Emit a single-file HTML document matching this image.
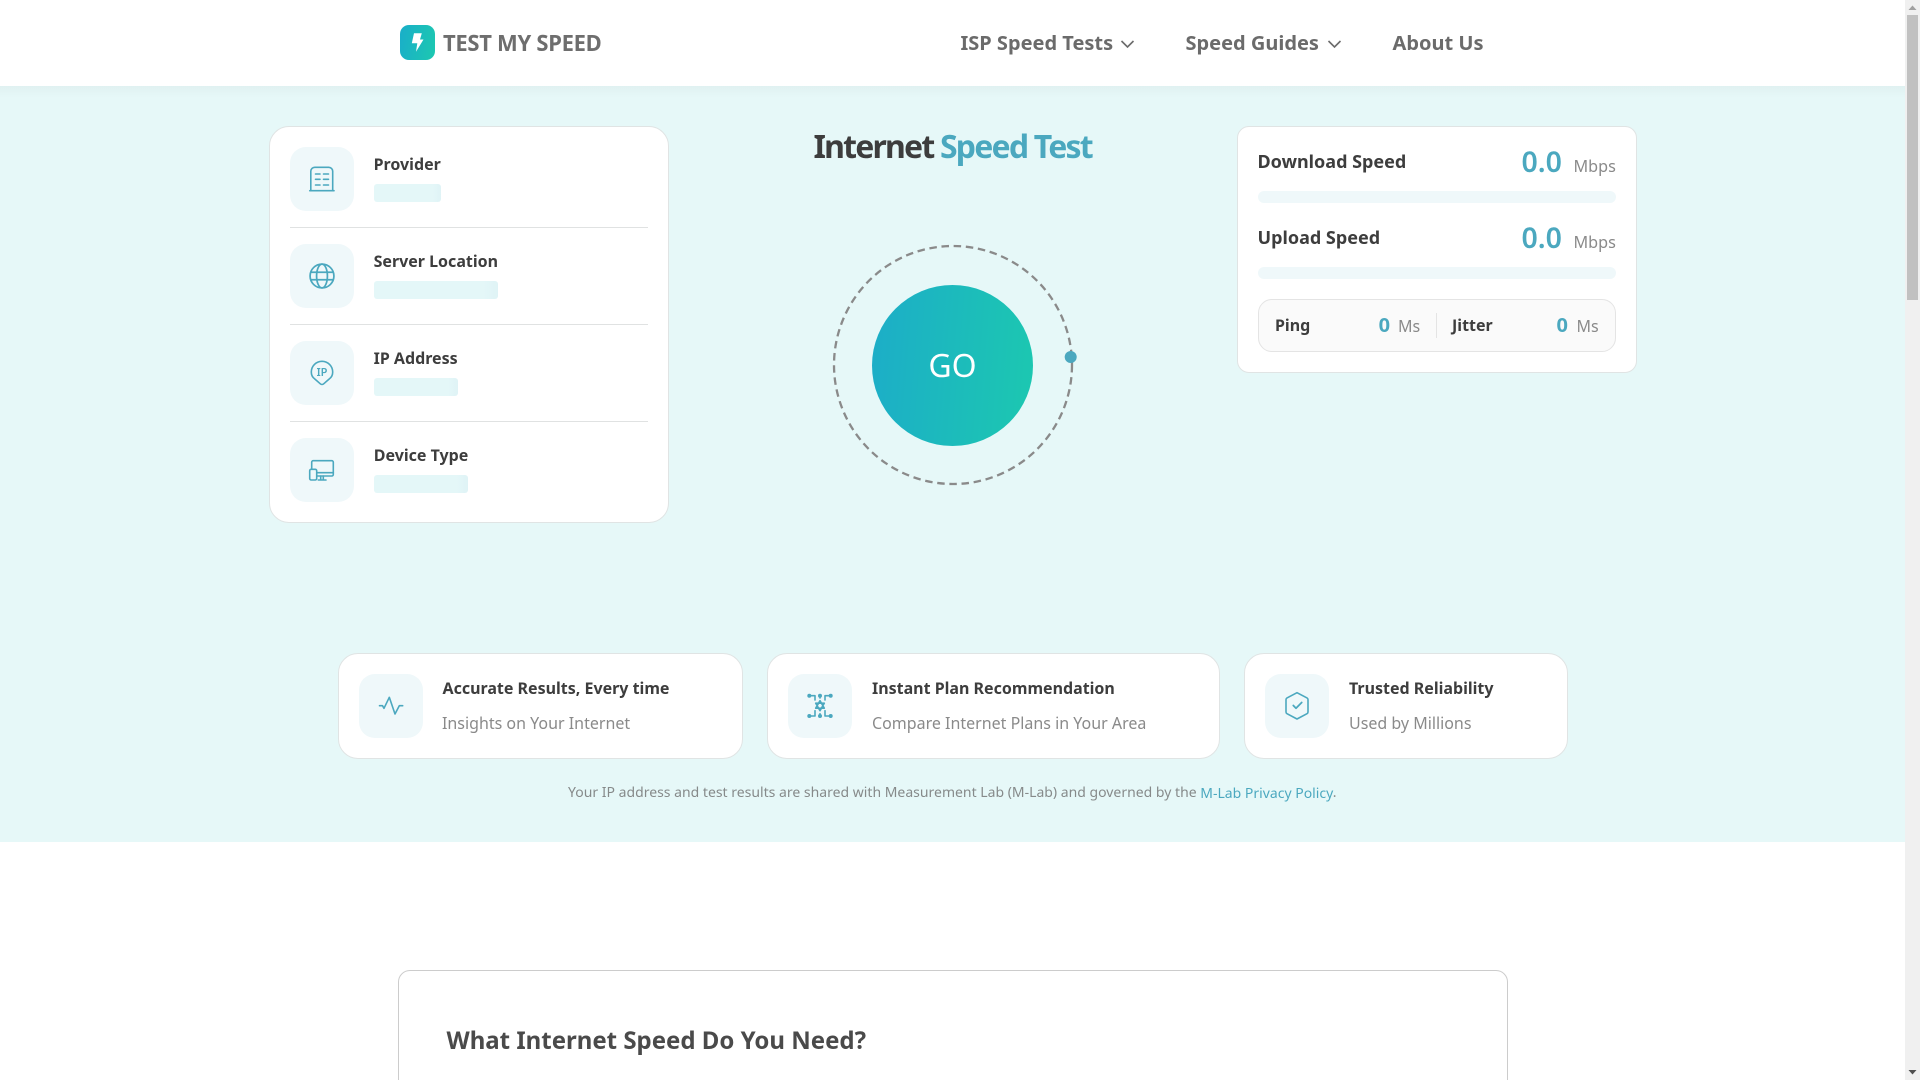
<!DOCTYPE html>
<html lang="en"><head><meta charset="utf-8"><title>Test My Speed</title>
<style>
*{box-sizing:border-box;margin:0;padding:0}
html,body{width:1920px;height:1080px;overflow:hidden;background:#fff}
body{font-family:"Noto Sans","Open Sans","DejaVu Sans","Liberation Sans",sans-serif;color:#3d3d3d;position:relative}
.a{position:absolute}
.t{position:absolute;white-space:nowrap;line-height:30px;height:30px}
.b{font-weight:700}
.card{position:absolute;background:#fff;border:1px solid #e0e4e4}
.ic{position:absolute;width:64px;height:64px;border-radius:16px;background:#eff8fa}
.ic svg{position:absolute;left:20px;top:20px;width:24px;height:24px;overflow:visible;fill:none;stroke:#4ba8bf;stroke-width:1.6;stroke-linecap:round;stroke-linejoin:round}
.sk{position:absolute;height:18px;border-radius:3px;background:linear-gradient(90deg,#e4f7f8 0,#e4f7f8 88%,#dff3f6 100%)}
.hr{position:absolute;left:290px;width:358px;height:1px;background:#e0e2e2}
.lab{font-size:16px;font-weight:700;color:#3d3d3d}
.nav{font-size:20px;font-weight:700;color:#6b6b6b}
.big{font-size:28.5px;font-weight:600;color:#4ba8bf}
.unit{font-size:16.2px;color:#8a8a8a}
.sub{font-size:16px;color:#8a8a8a}
.bar{position:absolute;left:1258px;width:358px;height:12px;border-radius:6px;background:#eff8fa}
</style></head><body>
<div class="a" style="left:0;top:86px;width:1905px;height:756px;background:#e6f8f8"></div>
<div class="a" style="left:0;top:86px;width:1905px;height:12px;background:linear-gradient(#e0f1f1,#e6f8f8)"></div>

<div class="a" style="left:400px;top:25px;width:35px;height:35px;border-radius:9px;background:linear-gradient(100deg,#1aaec9,#1cc8b0)">
<svg width="35" height="35" viewBox="0 0 35 35" style="position:absolute;left:0;top:0"><path d="M14 8.300h7.800l-1.800 6.200h3.500l-7.500 12.200 1.300-8.400h-5.500z" fill="#fff"/></svg></div>
<div class="t b" style="left:443px;top:28px;font-size:22px;color:#6e6e6e;letter-spacing:-.3px">TEST MY SPEED</div>

<div class="t nav" style="left:960.5px;top:28px">ISP Speed Tests</div>
<svg class="a" style="left:1120px;top:37.500px" width="15" height="12" viewBox="0 0 15 12" fill="none" stroke="#6b6b6b" stroke-width="1.6"><path d="M1.500 3l6 6 6-6"/></svg>
<div class="t nav" style="left:1185.5px;top:28px">Speed Guides</div>
<svg class="a" style="left:1327px;top:37.500px" width="15" height="12" viewBox="0 0 15 12" fill="none" stroke="#6b6b6b" stroke-width="1.6"><path d="M1.500 3l6 6 6-6"/></svg>
<div class="t nav" style="left:1392.5px;top:28px">About Us</div>

<!-- left card -->
<div class="card" style="left:269px;top:126px;width:400px;height:397px;border-radius:20px"></div>
<div class="ic" style="left:290px;top:147px"><svg viewBox="0 0 24 24"><path d="M.8 23V4.300A4 4 0 0 1 4.800.3h13.900a4 4 0 0 1 4 4V23"/><path d="M-.2 23.700h24.200" stroke-width="1.600"/><path d="M5.500 7h4.500M13.500 7h5M5.500 12.300h4.500M13.500 12.300h5M5.500 18h4.500M13.500 18h5"/></svg></div>
<div class="t lab" style="left:373.6px;top:149px">Provider</div><div class="sk" style="left:374px;top:184px;width:67px"></div>
<div class="hr" style="top:227px"></div>
<div class="ic" style="left:290px;top:244px"><svg viewBox="0 0 24 24" style="left:19px;top:19px;width:26px;height:26px" stroke-width="1.500"><circle cx="12" cy="12" r="11"/><ellipse cx="12" cy="12" rx="5" ry="11"/><path d="M1.600 8.500h20.800M1.600 15.500h20.800"/></svg></div>
<div class="t lab" style="left:373.6px;top:246px">Server Location</div><div class="sk" style="left:374px;top:281px;width:124px"></div>
<div class="hr" style="top:324px"></div>
<div class="ic" style="left:290px;top:341px"><svg viewBox="0 0 24 24" stroke-width="1.600"><path d="M12 .3A10.700 10.700 0 0 0 1.300 11c0 3.200 1.200 5.400 3.500 7l5.500 4.800a2.500 2.500 0 0 0 3.400 0l5.500-4.800c2.300-1.600 3.500-3.800 3.500-7A10.700 10.700 0 0 0 12 .3z"/><text x="12" y="15" text-anchor="middle" font-size="11" font-weight="600" fill="#4ba8bf" stroke="none" font-family="Noto Sans,DejaVu Sans,sans-serif">IP</text></svg></div>
<div class="t lab" style="left:373.6px;top:343px">IP Address</div><div class="sk" style="left:374px;top:378px;width:84px"></div>
<div class="hr" style="top:421px"></div>
<div class="ic" style="left:290px;top:438px"><svg viewBox="0 0 24 24" stroke-width="1.300"><path d="M1.700 10.500V4.200a1.500 1.500 0 0 1 1.500-1.500h18.600a1.500 1.500 0 0 1 1.500 1.500V16.500a1.500 1.500 0 0 1-1.500 1.500H7.500"/><path d="M7.500 14.700h15.800M10.700 18v4M13.300 18v4M8.300 22H16"/><rect x="-.3" y="11.300" width="7" height="10.700" rx="1.500"/></svg></div>
<div class="t lab" style="left:373.8px;top:440px">Device Type</div><div class="sk" style="left:374px;top:475px;width:94px"></div>

<!-- center -->
<div class="t b" style="left:813.500px;top:127px;height:40px;line-height:40px;font-size:32px;letter-spacing:-1.800px;color:#3d3d3d">Internet <span style="color:#4ba8bf">Speed Test</span></div>
<svg class="a" style="left:830px;top:242px" width="250" height="246" viewBox="0 0 250 246">
<circle cx="123" cy="123" r="119" fill="none" stroke="#8a8a8a" stroke-width="2.300" stroke-dasharray="7.500 4.700"/>
<circle cx="240.700" cy="115" r="6" fill="#4ba8bf"/></svg>
<div class="a" style="left:872px;top:284.5px;width:161px;height:161px;border-radius:50%;background:linear-gradient(95deg,#1cadc8,#1cc8b0);color:#fff;font-size:32px;line-height:161px;text-align:center">GO</div>

<!-- right card -->
<div class="card" style="left:1237px;top:126px;width:400px;height:247px;border-radius:12px"></div>
<div class="t lab" style="left:1257.5px;top:147px;font-size:18px">Download Speed</div>
<div class="t big" style="left:1521.5px;top:147px">0.0</div>
<div class="t unit" style="left:1573.5px;top:151px">Mbps</div>
<div class="bar" style="top:191px"></div>
<div class="t lab" style="left:1257.5px;top:223px;font-size:18px">Upload Speed</div>
<div class="t big" style="left:1521.5px;top:223px">0.0</div>
<div class="t unit" style="left:1573.5px;top:227px">Mbps</div>
<div class="bar" style="top:267px"></div>
<div class="a" style="left:1258px;top:299px;width:358px;height:53px;border-radius:14px;background:#fafafa;border:1px solid #e4e4e4"></div>
<div class="t lab" style="left:1275px;top:310px">Ping</div>
<div class="t b" style="left:1378.6px;top:310px;font-size:20px;color:#4ba8bf">0</div>
<div class="t" style="left:1398px;top:311px;font-size:16px;color:#8a8a8a">Ms</div>
<div class="a" style="left:1436px;top:313px;width:1px;height:25px;background:#e4e4e4"></div>
<div class="t lab" style="left:1452px;top:310px">Jitter</div>
<div class="t b" style="left:1556.5px;top:310px;font-size:20px;color:#4ba8bf">0</div>
<div class="t" style="left:1576.5px;top:311px;font-size:16px;color:#8a8a8a">Ms</div>

<!-- feature cards -->
<div class="card" style="left:338px;top:653px;width:405px;height:106px;border-radius:20px"></div>
<div class="ic" style="left:359px;top:674px"><svg viewBox="0 0 24 24" stroke-width="2"><path d="M.5 11.700H3.500L5 14.300 10.300 3.300 16 20l4.300-8.300h3.400"/></svg></div>
<div class="t lab" style="left:442.5px;top:673px">Accurate Results, Every time</div>
<div class="t sub" style="left:442px;top:708px">Insights on Your Internet</div>

<div class="card" style="left:767px;top:653px;width:453px;height:106px;border-radius:20px"></div>
<div class="ic" style="left:788px;top:674px"><svg viewBox="0 0 24 24" stroke-width="1.800"><path d="M12 6.700l4.300 7.500H7.700zM12 16.700L7.700 9.200h8.600z"/><path d="M1.300 1.700H7V6M22.700 1.700H17V6M1.300 22H7v-5.300M22.700 22H17v-5.300M12 1.700V4M12 22v-2.300"/><circle cx="1.300" cy="1.700" r="1.200" fill="#4ba8bf"/><circle cx="22.700" cy="1.700" r="1.200" fill="#4ba8bf"/><circle cx="1.300" cy="22" r="1.200" fill="#4ba8bf"/><circle cx="22.700" cy="22" r="1.200" fill="#4ba8bf"/><circle cx="12" cy="1.700" r="1.200" fill="#4ba8bf"/><circle cx="12" cy="22" r="1.200" fill="#4ba8bf"/></svg></div>
<div class="t lab" style="left:872px;top:673px">Instant Plan Recommendation</div>
<div class="t sub" style="left:872px;top:708px">Compare Internet Plans in Your Area</div>

<div class="card" style="left:1244px;top:653px;width:324px;height:106px;border-radius:20px"></div>
<div class="ic" style="left:1265px;top:674px"><svg viewBox="0 0 24 24" stroke-width="1.700"><path d="M12-1.300L22 3.900a2 2 0 0 1 1 1.700V18a2 2 0 0 1-1 1.700L12 25 2 19.700a2 2 0 0 1-1-1.700V5.600a2 2 0 0 1 1-1.700z"/><path d="M8.300 11.500l2.700 2.700 5.700-5.700" stroke-width="1.800"/></svg></div>
<div class="t lab" style="left:1349px;top:673px">Trusted Reliability</div>
<div class="t sub" style="left:1349px;top:708px">Used by Millions</div>

<div class="t" style="left:568px;top:778px;font-size:14px;color:#868a8a">Your IP address and test results are shared with Measurement Lab (M-Lab) and governed by the <span style="color:#4ba8bf;position:relative;top:1px">M-Lab Privacy Policy</span>.</div>

<!-- lower card -->
<div class="a" style="left:398px;top:970px;width:1110px;height:130px;border:1px solid #ccc;border-radius:12px;background:#fff"></div>
<div class="t b" style="left:446.5px;top:1023px;height:36px;line-height:36px;font-size:24px;color:#4a4a4a">What Internet Speed Do You Need?</div>

<!-- scrollbar -->
<div class="a" style="left:1905px;top:0;width:15px;height:1080px;background:#f0f0f0"></div>
<div class="a" style="left:1907px;top:15px;width:11px;height:285px;background:#c1c1c1"></div>
<svg class="a" style="left:1905px;top:0" width="15" height="15"><path d="M3.500 10h8L7.500 5.500z" fill="#a0a0a0"/></svg>
<svg class="a" style="left:1905px;top:1065px" width="15" height="15"><path d="M3.500 5h8L7.500 9.500z" fill="#505050"/></svg>
</body></html>
